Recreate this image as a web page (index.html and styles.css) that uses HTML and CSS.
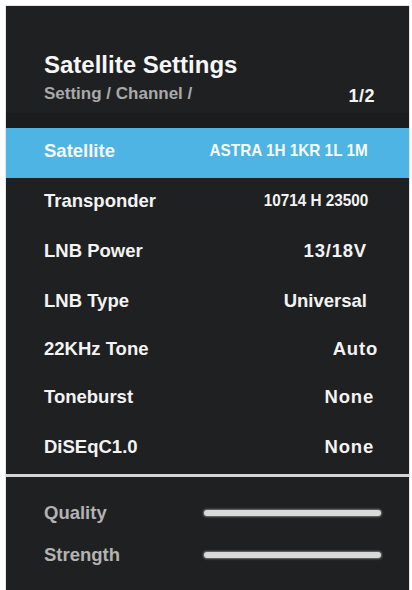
FILE: index.html
```html
<!DOCTYPE html>
<html lang="en">
<head>
<meta charset="utf-8">
<title>Satellite Settings</title>
<link rel="stylesheet" href="styles.css">
</head>
<body>
<div class="panel">
  <header class="header">
    <h1 class="title">Satellite Settings</h1>
    <div class="crumbs">
      <span class="path">Setting / Channel /</span>
      <span class="page">1/2</span>
    </div>
  </header>
  <div class="band"></div>
  <ul class="list">
    <li class="row row--active"><span class="label">Satellite</span><span class="val val--narrow">ASTRA 1H 1KR 1L 1M</span></li>
    <li class="row"><span class="label">Transponder</span><span class="val val--narrow">10714 H 23500</span></li>
    <li class="row row--r42"><span class="label">LNB Power</span><span class="val val--spaced">13/18V</span></li>
    <li class="row row--r42"><span class="label">LNB Type</span><span class="val">Universal</span></li>
    <li class="row row--short row--r31"><span class="label">22KHz Tone</span><span class="val val--spaced">Auto</span></li>
    <li class="row row--r35"><span class="label">Toneburst</span><span class="val val--spaced">None</span></li>
    <li class="row row--r35"><span class="label">DiSEqC1.0</span><span class="val val--spaced">None</span></li>
  </ul>
  <div class="divider"></div>
  <div class="signal">
    <div class="sig-row"><span class="sig-label">Quality</span><span class="bar"></span></div>
    <div class="sig-row"><span class="sig-label">Strength</span><span class="bar"></span></div>
  </div>
</div>
</body>
</html>
```
FILE: styles.css
```css
* { box-sizing: border-box; }
html, body {
  margin: 0;
  padding: 0;
  background: #ffffff;
}
body {
  font-family: "Liberation Sans", Arial, sans-serif;
  font-weight: bold;
  color: #f2f2f2;
}
.panel {
  margin: 6px 0 0 6px;
  width: 403px;
  height: 584px;
  background: #1f2021;
  display: flex;
  flex-direction: column;
  box-shadow: 0 0 1px #666;
}
.header {
  padding: 45px 34px 0 38px;
  height: 107px;
}
.title {
  margin: 0;
  font-size: 24px;
  line-height: 28px;
  font-weight: bold;
  color: #f6f6f6;
}
.crumbs {
  margin-top: 5px;
  display: flex;
  justify-content: space-between;
  align-items: flex-start;
}
.path {
  font-size: 17px;
  line-height: 20px;
  color: #a9a9a9;
}
.page {
  margin-top: 2px;
  font-size: 18px;
  line-height: 20px;
  letter-spacing: 0.5px;
  color: #f4f4f4;
}
.band {
  height: 15px;
  background: #1b1c1d;
}
.list {
  list-style: none;
  margin: 0;
  padding: 0;
}
.row {
  height: 50px;
  display: flex;
  justify-content: space-between;
  align-items: center;
  padding: 0 41px 4px 38px;
  font-size: 18.5px;
  line-height: 22px;
  color: #f3f3f3;
}
.row--active {
  background: #4eb4e4;
  color: #f7fbfd;
}
.row--short { height: 46px; }
.row--r42 { padding-right: 42px; }
.row--r31 { padding-right: 31px; }
.row--r35 { padding-right: 35px; }
.val--narrow {
  display: inline-block;
  font-size: 17px;
  transform: scaleX(0.9);
  transform-origin: right center;
}
.val--spaced { letter-spacing: 0.8px; }
.divider {
  height: 3px;
  background: #d4d4d4;
}
.signal {
  padding: 15px 28px 0 38px;
}
.sig-row {
  height: 41.5px;
  display: grid;
  grid-template-columns: 160px 177px;
  align-items: center;
}
.sig-label {
  font-size: 18.5px;
  line-height: 42px;
  color: #b3b3b3;
}
.bar {
  height: 6px;
  border-radius: 3px;
  background: #d9d9d9;
  box-shadow: 0 0 2px 1px rgba(170, 170, 170, 0.6);
}
```
